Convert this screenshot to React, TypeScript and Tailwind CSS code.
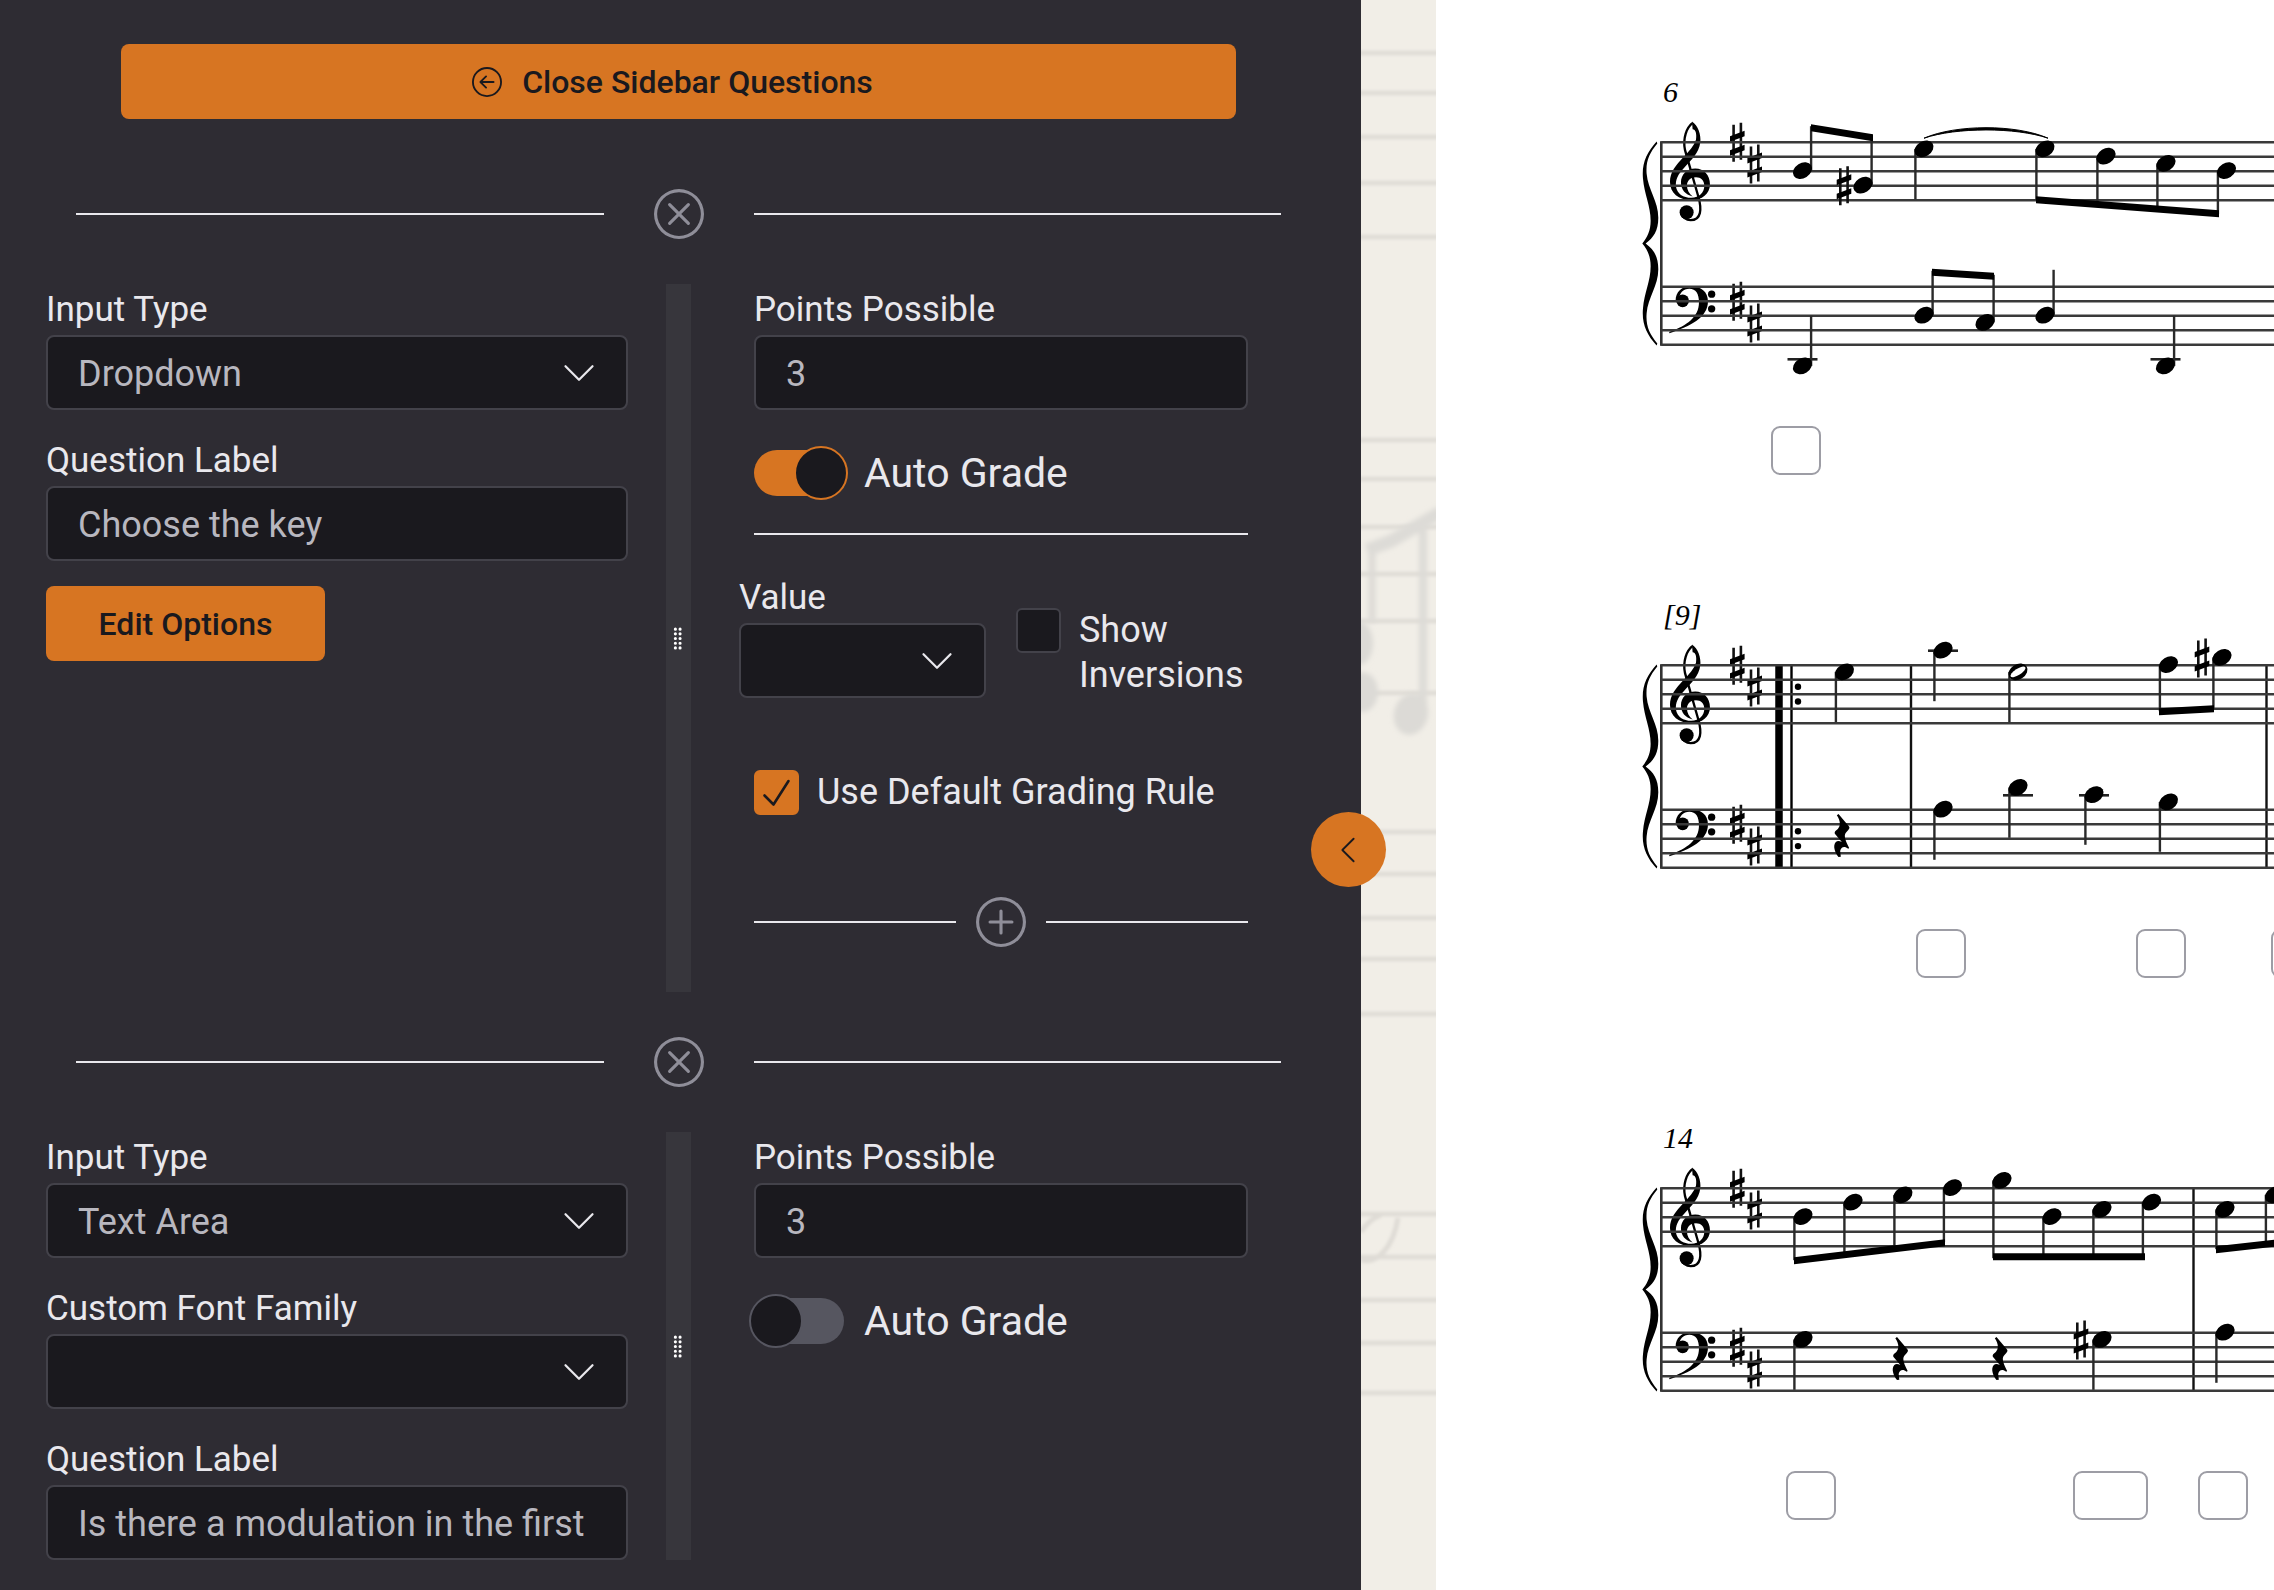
import { useId, type ReactNode } from "react";
import {
  BsArrowLeftCircle,
  BsChevronDown,
  BsChevronLeft,
  BsGripVertical,
  BsPlusCircle,
  BsXCircle,
} from "react-icons/bs";

/* ---------- form controls ---------- */

const boxStyle =
  "h-[75px] w-full rounded-lg border-2 border-[#43424a] bg-[#1a191e] px-[30px] pt-0.5 text-[36px] text-[#b8b7bf] outline-none";

function Field({ id, label, children }: { id: string; label: string; children: ReactNode }) {
  return (
    <div className="flex flex-col">
      <label htmlFor={id} className="text-[35px] leading-[51px] text-[#e9e8ed]">
        {label}
      </label>
      {children}
    </div>
  );
}

function TextField({ label, value }: { label: string; value: string }) {
  const id = useId();
  return (
    <Field id={id} label={label}>
      <input id={id} type="text" defaultValue={value} className={boxStyle} />
    </Field>
  );
}

function SelectField({ label, options }: { label: string; options: string[] }) {
  const id = useId();
  return (
    <Field id={id} label={label}>
      <div className="relative">
        <select id={id} className={`${boxStyle} appearance-none`}>
          {options.map((option) => (
            <option key={option}>{option}</option>
          ))}
        </select>
        <BsChevronDown
          size={36}
          className="pointer-events-none absolute top-1/2 right-[31px] -translate-y-1/2 text-[#e9e8ed]"
        />
      </div>
    </Field>
  );
}

function Checkbox({ label, checked = false }: { label: string; checked?: boolean }) {
  return (
    <label className="flex items-start gap-[18px] text-[36px] leading-[45px] text-[#e9e8ed]">
      <span className="relative size-[45px] shrink-0">
        <input
          type="checkbox"
          defaultChecked={checked}
          className="peer block size-full appearance-none rounded-md border-2 border-[#43424a] bg-[#1a191e] checked:border-[#d77522] checked:bg-[#d77522]"
        />
        <svg
          viewBox="0 0 45 45"
          className="pointer-events-none absolute inset-0 hidden text-[#1a191e] peer-checked:block"
          fill="none"
          stroke="currentColor"
          strokeWidth="2.6"
          strokeLinecap="round"
          strokeLinejoin="round"
        >
          <path d="M10.5 25.5 19.5 34.5 34.5 11" />
        </svg>
      </span>
      <span>{label}</span>
    </label>
  );
}

function Toggle({ label, checked = false }: { label: string; checked?: boolean }) {
  return (
    <label className="flex items-center gap-5 text-[41px] leading-[46px] text-[#e9e8ed]">
      <input
        type="checkbox"
        role="switch"
        defaultChecked={checked}
        className="relative h-[46px] w-[90px] shrink-0 appearance-none rounded-full bg-[#565660] before:absolute before:-top-1 before:-left-[5px] before:size-[54px] before:rounded-full before:border-2 before:border-[#565660] before:bg-[#1a191e] checked:bg-[#d77522] checked:before:left-10 checked:before:border-[#d77522]"
      />
      <span>{label}</span>
    </label>
  );
}

function OrangeButton({ className, children }: { className: string; children: ReactNode }) {
  return (
    <button
      type="button"
      className={`flex h-[75px] items-center justify-center gap-5 rounded-lg bg-[#d77522] text-[32px] font-medium text-[#1a191e] ${className}`}
    >
      {children}
    </button>
  );
}

function Rule() {
  return <div className="h-0.5 flex-1 bg-[#e9e8ed]" />;
}

/* ---------- sidebar ---------- */

function Question({ left, right }: { left: ReactNode; right: ReactNode }) {
  return (
    <section className="flex flex-col gap-[45px]">
      <div className="flex items-center gap-[50px] px-[76px]">
        <Rule />
        <button type="button" aria-label="Remove question" className="text-[#8f8e99]">
          <BsXCircle size={50} />
        </button>
        <Rule />
      </div>
      <div className="grid grid-cols-[1fr_25px_1fr]">
        <div className="flex min-w-0 flex-col gap-[25px] pr-[38px] pl-[46px]">{left}</div>
        <div className="flex items-center justify-center bg-[#37363c] text-white">
          <BsGripVertical size={25} className="shrink-0" />
        </div>
        <div className="flex min-w-0 flex-col pr-[109px] pl-[63px]">{right}</div>
      </div>
    </section>
  );
}

function Sidebar() {
  return (
    <aside className="relative z-10 w-[59.85%] shrink-0 bg-[#2e2c33] pr-1">
      <div className="flex flex-col gap-[70px] pt-11">
        <div className="px-[121px]">
          <OrangeButton className="w-full pr-3">
            <BsArrowLeftCircle size={30} />
            Close Sidebar Questions
          </OrangeButton>
        </div>

        <div className="flex flex-col gap-[45px]">
          <Question
            left={
              <>
                <SelectField label="Input Type" options={["Dropdown", "Text Area"]} />
                <TextField label="Question Label" value="Choose the key" />
                <OrangeButton className="w-[279px]">Edit Options</OrangeButton>
              </>
            }
            right={
              <>
                <TextField label="Points Possible" value="3" />
                <div className="mt-10">
                  <Toggle label="Auto Grade" checked />
                </div>
                <div className="mt-[37px] h-0.5 bg-[#e9e8ed]" />
                <div className="mt-[37px] -ml-[15px] flex gap-[30px]">
                  <div className="w-[247px] shrink-0">
                    <SelectField label="Value" options={[""]} />
                  </div>
                  <div className="pt-9">
                    <Checkbox label="Show Inversions" />
                  </div>
                </div>
                <div className="mt-[72px]">
                  <Checkbox label="Use Default Grading Rule" checked />
                </div>
                <div className="mt-[82px] flex items-center gap-5 pb-[45px]">
                  <Rule />
                  <button type="button" aria-label="Add grading rule" className="text-[#8f8e99]">
                    <BsPlusCircle size={50} />
                  </button>
                  <Rule />
                </div>
              </>
            }
          />
          <Question
            left={
              <>
                <SelectField label="Input Type" options={["Text Area", "Dropdown"]} />
                <SelectField label="Custom Font Family" options={[""]} />
                <TextField label="Question Label" value="Is there a modulation in the first" />
              </>
            }
            right={
              <>
                <TextField label="Points Possible" value="3" />
                <div className="mt-10">
                  <Toggle label="Auto Grade" />
                </div>
              </>
            }
          />
        </div>
      </div>

      <button
        type="button"
        aria-label="Collapse sidebar"
        className="absolute top-[812px] -right-[25px] flex size-[75px] items-center justify-center rounded-full bg-[#d77522] text-[#1a191e]"
      >
        <BsChevronLeft size={30} />
      </button>
    </aside>
  );
}

/* ---------- paper texture behind the sheet ---------- */

const paperLines = [
  53, 93, 137, 183, 237, 440, 479, 527, 574, 621, 693, 832, 874, 918, 959, 1014, 1214, 1257, 1300, 1343, 1393,
];

function Paper() {
  return (
    <svg className="h-[1590px] w-[75px] shrink-0" viewBox="0 0 75 1590" aria-hidden="true">
      <defs>
        <filter id="soft" x="-30%" y="-5%" width="160%" height="110%">
          <feGaussianBlur stdDeviation="1.8" />
        </filter>
        <filter id="softer" x="-30%" y="-10%" width="160%" height="120%">
          <feGaussianBlur stdDeviation="2.8" />
        </filter>
      </defs>
      <g filter="url(#soft)" stroke="#dfdcd6" fill="none">
        {paperLines.map((y) => (
          <path key={y} d={`M-10 ${y}H85`} strokeWidth="4.5" />
        ))}
        <path d="M0 1260C16 1264 32 1248 37 1218M0 1232C6 1222 12 1218 20 1215" strokeWidth="5" />
      </g>
      <g filter="url(#softer)" stroke="#dddbd7" fill="none">
        <path d="M6 550 30 541 80 512" strokeWidth="13" />
        <path d="M11 550V622" strokeWidth="7" />
        <path d="M62 524V705" strokeWidth="8" />
        <g fill="#dcdad6" stroke="none">
          <ellipse cx="-2" cy="643" rx="14" ry="22" />
          <ellipse cx="1" cy="692" rx="16" ry="20" />
          <ellipse cx="50" cy="714" rx="17" ry="21" transform="rotate(15 50 714)" />
        </g>
      </g>
    </svg>
  );
}

/* ---------- score ---------- */

// Vertical positions are steps of half a staff space, counted down from the top line.
const SPACE = 14.5;
const BASS = 144.6;
const LEFT = 225.3;

type Note = {
  x: number;
  step: number;
  stem: number; // end of the stem, px below the staff's top line
  up?: boolean;
  half?: boolean;
  sharp?: number;
  ledger?: number;
};
type Beam = [x1: number, y1: number, x2: number, y2: number];
type Staff = { notes: Note[]; beams: Beam[]; rests?: number[] };
type ScoreSystem = {
  label: string;
  treble: Staff;
  bass: Staff;
  bars: number[];
  repeat?: boolean;
  slur?: string;
  answers: { className: string; name: string }[];
};

const systems: ScoreSystem[] = [
  {
    label: "6",
    bars: [],
    slur: "M488 -4C520 -18 580 -18 612 -4C580 -15 520 -15 488 -4Z",
    treble: {
      notes: [
        { x: 366.5, step: 4, stem: -16, up: true },
        { x: 427, step: 6, stem: -6, up: true, sharp: 408 },
        { x: 488, step: 1, stem: 57 },
        { x: 609, step: 1, stem: 58 },
        { x: 670, step: 2, stem: 62 },
        { x: 730, step: 3, stem: 66 },
        { x: 790.5, step: 4, stem: 72 },
      ],
      beams: [
        [375, -18, 437, -8],
        [600, 54, 783, 68],
      ],
    },
    bass: {
      notes: [
        { x: 366.5, step: 11, stem: 29, up: true, ledger: 10 },
        { x: 488, step: 4, stem: -16, up: true },
        { x: 549, step: 5, stem: -12, up: true },
        { x: 609, step: 4, stem: -17, up: true },
        { x: 729.5, step: 11, stem: 29, up: true, ledger: 10 },
      ],
      beams: [[496, -18, 558, -14]],
    },
    answers: [{ name: "Measure 6 answer", className: "top-[426px] left-[335px] w-[50px]" }],
  },
  {
    label: "[9]",
    bars: [475, 830.5],
    repeat: true,
    treble: {
      notes: [
        { x: 408.5, step: 1, stem: 57 },
        { x: 507, step: -2, stem: 36, ledger: -2 },
        { x: 582, step: 1, stem: 57, half: true },
        { x: 732.5, step: 0, stem: 46 },
        { x: 786, step: -1, stem: 44, sharp: 766 },
      ],
      beams: [[723, 43, 778, 40]],
    },
    bass: {
      rests: [406],
      notes: [
        { x: 507, step: 0, stem: 50 },
        { x: 582, step: -3, stem: 28, ledger: -2 },
        { x: 658, step: -2, stem: 35, ledger: -2 },
        { x: 732.5, step: -1, stem: 42 },
      ],
      beams: [],
    },
    answers: [
      { name: "Measure 10 answer", className: "top-[406px] left-[480px] w-[50px]" },
      { name: "Measure 10 second answer", className: "top-[406px] left-[700px] w-[50px]" },
      { name: "Measure 11 answer", className: "top-[406px] left-[835px] w-[50px]" },
    ],
  },
  {
    label: "14",
    bars: [757.5],
    treble: {
      notes: [
        { x: 367, step: 4, stem: 72 },
        { x: 417, step: 2, stem: 66 },
        { x: 467, step: 1, stem: 60 },
        { x: 516.5, step: 0, stem: 54 },
        { x: 566, step: -1, stem: 70 },
        { x: 616, step: 4, stem: 70 },
        { x: 666, step: 3, stem: 70 },
        { x: 715.5, step: 2, stem: 70 },
        { x: 789, step: 3, stem: 61 },
        { x: 838.5, step: 1, stem: 56 },
      ],
      beams: [
        [358, 69, 509, 51],
        [557, 65, 709, 65],
        [780, 58, 860, 49],
      ],
    },
    bass: {
      rests: [464.5, 564],
      notes: [
        { x: 367, step: 1, stem: 57 },
        { x: 666, step: 1, stem: 57, sharp: 645 },
        { x: 789, step: 0, stem: 50 },
      ],
      beams: [],
    },
    answers: [
      { name: "Measure 14 answer", className: "top-[425px] left-[350px] w-[50px]" },
      { name: "Measure 14 second answer", className: "top-[425px] left-[637px] w-[75px]" },
      { name: "Measure 15 answer", className: "top-[425px] left-[762px] w-[50px]" },
    ],
  },
];

function Sharp({ x, step }: { x: number; step: number }) {
  return (
    <g transform={`translate(${x} ${(step * SPACE) / 2})`}>
      <path d="M-3.7 -17.5V19.5M3.6 -19.5V17.5" stroke="#111" strokeWidth="2.6" />
      <path d="M-7.3 -6 7.3 -11.5V-6L-7.3 -.5ZM-7.3 8 7.3 2.5V8L-7.3 13.5Z" />
    </g>
  );
}

function TrebleClef() {
  return (
    <g transform={`translate(${LEFT}) scale(.3333) translate(-94 -99)`}>
      <path d="M186 37C204 48 214 78 211 100C207 132 184 152 164 174C143 196 136 212 138 232C141 254 160 266 184 266C208 266 223 250 223 230C223 214 213 204 198 204C182 204 171 214 171 229C171 243 178 254 188 262C166 256 153 241 153 220C153 196 171 178 196 178C222 178 240 198 240 225C240 254 216 273 184 273C146 273 120 252 120 218C120 188 138 168 160 144C178 126 192 110 198 92C201 74 197 60 188 60Z" />
      <path
        d="M187 42C170 56 158 86 165 122L205 262C216 300 214 333 182 333C168 333 157 324 154 312"
        fill="none"
        stroke="#000"
        strokeWidth="7"
      />
      <circle cx="170" cy="309" r="21" />
    </g>
  );
}

function BassClef() {
  return (
    <g transform={`translate(${LEFT}) scale(.3333) translate(-94 -531)`}>
      <path d="M118 670C182 650 234 622 234 575C234 545 213 529 182 529C155 529 137 546 137 572L147 572C147 550 160 537 178 537C198 537 207 552 207 578C207 620 172 648 118 666Z" />
      <circle cx="158" cy="573" r="19" />
      <circle cx="245" cy="553" r="11" />
      <circle cx="245" cy="597" r="11" />
    </g>
  );
}

function Brace() {
  return (
    <path
      transform={`translate(${LEFT}) scale(.3333) translate(-94 -99)`}
      d="M80 97C50 130 35 162 39 208C43 256 62 290 62 335C62 365 52 385 37 403C52 421 62 441 62 471C62 516 43 550 39 598C35 644 50 676 80 709L82 703C58 674 47 650 50 612C54 564 85 530 85 480C85 440 70 420 47 403C70 386 85 366 85 326C85 276 54 242 50 194C47 156 58 132 82 103Z"
    />
  );
}

function Rest({ x }: { x: number }) {
  return (
    <path
      transform={`translate(${x} 25.5) scale(.3333) translate(-127.5 -617)`}
      d="M117 553 148 590C152 594 150 599 141 607C133 615 134 625 149 655L146 657C134 648 125 652 122 664L124 681 117 682C106 668 99 648 109 637C114 633 120 634 127 637L106 612C104 606 108 604 115 598C124 588 123 574 112 557Z"
    />
  );
}

function NoteMark({ note }: { note: Note }) {
  const y = (note.step * SPACE) / 2 - 0.6;
  const stemX = note.up ? note.x + 8.6 : note.x - 8.6;
  return (
    <g>
      {note.ledger !== undefined && (
        <path
          d={`M${note.x - 15} ${(note.ledger * SPACE) / 2}H${note.x + 15}`}
          stroke="#222"
          strokeWidth="2.6"
        />
      )}
      <path d={`M${stemX} ${y}V${note.stem}`} stroke="#2a2a2a" strokeWidth="2.4" />
      <g transform={`translate(${note.x} ${y}) rotate(-32)`}>
        <ellipse rx="10.2" ry="7.6" />
        {note.half && <ellipse rx="8.6" ry="3.2" fill="#fff" />}
      </g>
      {note.sharp !== undefined && <Sharp x={note.sharp} step={note.step} />}
    </g>
  );
}

function StaffMarks({ staff, y }: { staff: Staff; y: number }) {
  return (
    <g transform={`translate(0 ${y})`}>
      {[0, 1, 2, 3, 4].map((line) => (
        <path key={line} d={`M${LEFT} ${line * SPACE}H2000`} stroke="#3a3a3a" strokeWidth="2.5" />
      ))}
      {staff.notes.map((note) => (
        <NoteMark key={note.x} note={note} />
      ))}
      {staff.beams.map(([x1, y1, x2, y2]) => (
        <path key={x1} d={`M${x1} ${y1}L${x2} ${y2}V${y2 + 7}L${x1} ${y1 + 7}Z`} />
      ))}
      {staff.rests?.map((x) => (
        <Rest key={x} x={x} />
      ))}
    </g>
  );
}

function SystemView({ system }: { system: ScoreSystem }) {
  const bottom = BASS + 4 * SPACE;
  return (
    <section className="relative h-[523px]">
      <svg className="block size-full" role="img" aria-label={`Music from measure ${system.label}`}>
        <g transform="translate(0 142.2)">
          <text x="227" y="-40" fontSize="30" fontStyle="italic" className="font-['Liberation_Serif',serif]">
            {system.label}
          </text>
          <Brace />
          <path d={`M${LEFT} -1V${bottom + 1}`} stroke="#333" strokeWidth="2.6" />
          <TrebleClef />
          <Sharp x={301.3} step={0} />
          <Sharp x={318.7} step={3} />
          <g transform={`translate(0 ${BASS})`}>
            <BassClef />
            <Sharp x={301.3} step={2} />
            <Sharp x={318.7} step={5} />
          </g>
          {system.repeat && (
            <g>
              <path d={`M343 0V${bottom}`} stroke="#000" strokeWidth="7.5" />
              <path d={`M355.5 0V${bottom}`} stroke="#000" strokeWidth="2.4" />
              {[21.5, 36.3, 21.5 + BASS, 36.3 + BASS].map((y) => (
                <circle key={y} cx="362" cy={y} r="3.2" />
              ))}
            </g>
          )}
          {system.bars.map((x) => (
            <path key={x} d={`M${x} 0V${bottom}`} stroke="#111" strokeWidth="2.4" />
          ))}
          <StaffMarks staff={system.treble} y={0} />
          <StaffMarks staff={system.bass} y={BASS} />
          {system.slur && <path d={system.slur} stroke="#000" strokeWidth="1" />}
        </g>
      </svg>
      {system.answers.map((answer) => (
        <input
          key={answer.name}
          type="text"
          aria-label={answer.name}
          className={`absolute h-[49px] rounded-[9px] border-2 border-[#9d9da5] bg-white ${answer.className}`}
        />
      ))}
    </section>
  );
}

export default function App() {
  return (
    <div className="flex h-screen overflow-hidden bg-[#f1eee7] font-[Roboto,sans-serif]">
      <Sidebar />
      <main className="flex min-w-0 flex-1">
        <Paper />
        <div className="min-w-0 flex-1 overflow-hidden bg-white">
          {systems.map((system) => (
            <SystemView key={system.label} system={system} />
          ))}
        </div>
      </main>
    </div>
  );
}
